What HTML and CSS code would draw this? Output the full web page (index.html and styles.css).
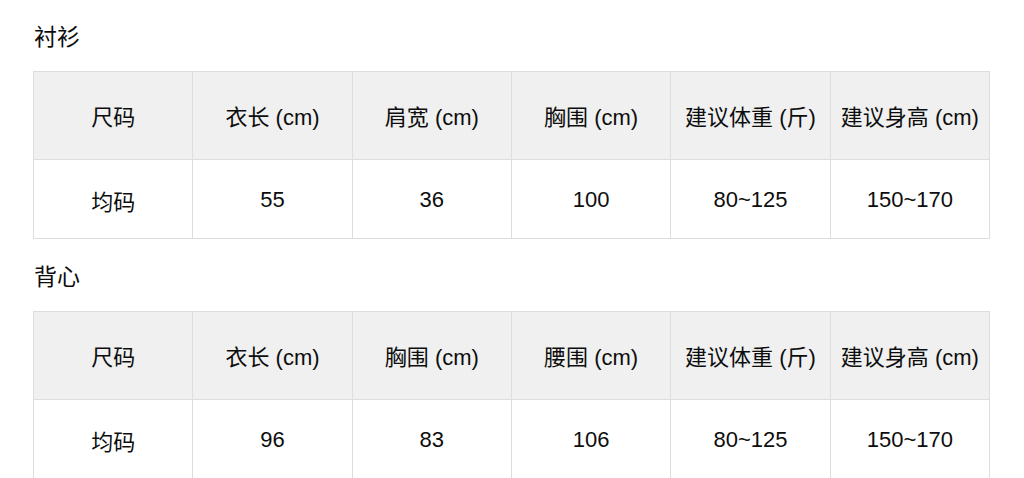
FILE: index.html
```html
<!DOCTYPE html>
<html lang="zh">
<head>
<meta charset="utf-8">
<link rel="stylesheet" href="styles.css">
</head>
<body>
<div class="page">
  <section class="section first">
    <h2 class="title">衬衫</h2>
    <table class="size-table">
      <thead>
        <tr><th>尺码</th><th>衣长 (cm)</th><th>肩宽 (cm)</th><th>胸围 (cm)</th><th>建议体重 (斤)</th><th>建议身高 (cm)</th></tr>
      </thead>
      <tbody>
        <tr><td>均码</td><td>55</td><td>36</td><td>100</td><td>80~125</td><td>150~170</td></tr>
      </tbody>
    </table>
  </section>
  <section class="section">
    <h2 class="title">背心</h2>
    <table class="size-table">
      <thead>
        <tr><th>尺码</th><th>衣长 (cm)</th><th>胸围 (cm)</th><th>腰围 (cm)</th><th>建议体重 (斤)</th><th>建议身高 (cm)</th></tr>
      </thead>
      <tbody>
        <tr><td>均码</td><td>96</td><td>83</td><td>106</td><td>80~125</td><td>150~170</td></tr>
      </tbody>
    </table>
  </section>
</div>
</body>
</html>
```
FILE: styles.css
```css
html, body {
  margin: 0;
  padding: 0;
  background: #ffffff;
}
body {
  font-family: "Liberation Sans", "Noto Sans CJK SC", sans-serif;
  color: #0d0d0d;
}
.page {
  padding: 0 34px 0 33px;
}
.section {
  padding-top: 23px;
}
.section.first {
  padding-top: 22px;
}
.title {
  margin: 0 0 19px 1px;
  font-size: 23px;
  line-height: 30px;
  font-weight: normal;
}
.size-table {
  width: 100%;
  border-collapse: collapse;
  table-layout: fixed;
}
.size-table th,
.size-table td {
  border: 1px solid #dddddd;
  text-align: center;
  font-size: 22px;
  font-weight: normal;
  padding: 0;
  white-space: nowrap;
}
.size-table th {
  background: #f0f0f0;
  height: 85px;
  padding-bottom: 2px;
}
.size-table td {
  height: 77px;
  padding-top: 1px;
}
```
